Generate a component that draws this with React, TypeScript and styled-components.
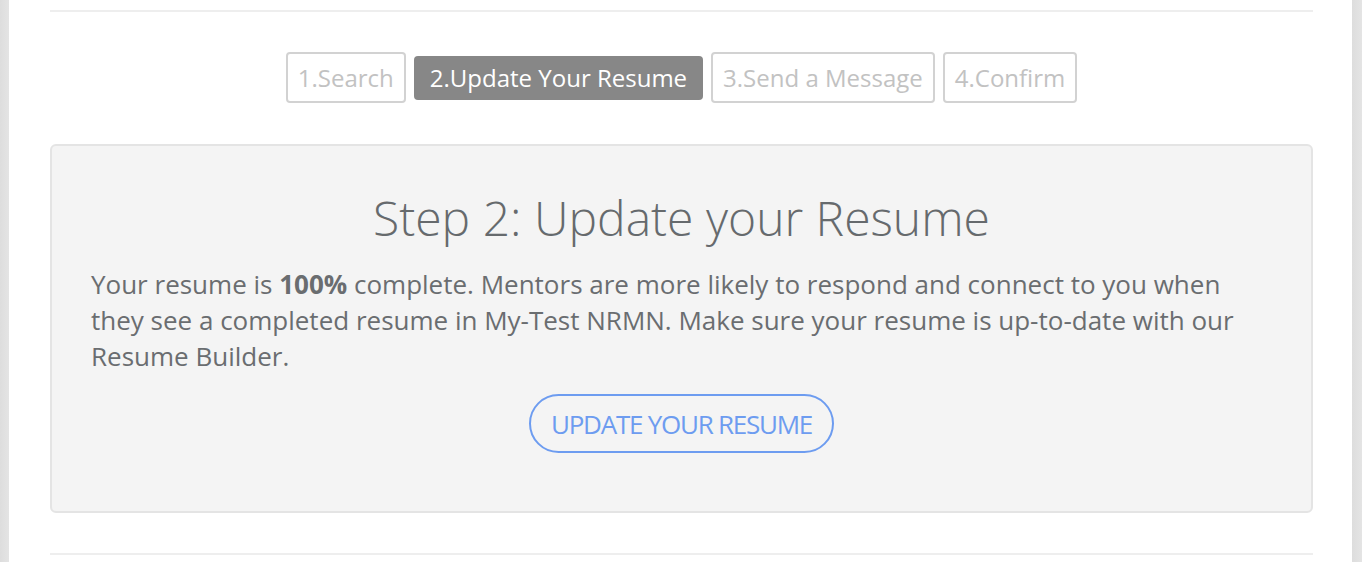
import React from "react";
import styled, { createGlobalStyle } from "styled-components";

const Global = createGlobalStyle`
  html, body { margin: 0; padding: 0; background: #ffffff; }
  body { font-family: "Open Sans", "Noto Sans", sans-serif; }
`;

const Page = styled.div`
  display: flex;
  min-height: 562px;
  background: #ffffff;
`;

const SideBar = styled.div<{ $w: number }>`
  width: ${(p) => p.$w}px;
  flex: 0 0 auto;
  background: linear-gradient(to right, #dddddd, #e4e4e4);
`;

const Main = styled.main`
  flex: 1;
  padding: 10px 39px 0 41px;
  display: flex;
  flex-direction: column;
`;

const Rule = styled.hr`
  margin: 0;
  border: none;
  border-top: 2px solid #eeeeee;
`;

const Steps = styled.nav`
  display: flex;
  justify-content: center;
  align-items: center;
  gap: 8px;
  margin: 40px 0 41px;
  height: 51px;
`;

const StepTab = styled.span<{ $active?: boolean }>`
  display: inline-flex;
  align-items: center;
  box-sizing: border-box;
  height: ${(p) => (p.$active ? 44 : 51)}px;
  padding: 0 ${(p) => (p.$active ? 16 : 10)}px;
  font-size: 24px;
  color: ${(p) => (p.$active ? "#ffffff" : "#c2c2c2")};
  background: ${(p) => (p.$active ? "#878787" : "#ffffff")};
  border: ${(p) => (p.$active ? "none" : "2px solid #d2d2d2")};
  border-radius: 4px;
  white-space: nowrap;
`;

const Panel = styled.section`
  box-sizing: border-box;
  height: 369px;
  background: #f4f4f4;
  border: 2px solid #e4e4e4;
  border-radius: 6px;
  padding: 44px 39px 0;
  display: flex;
  flex-direction: column;
  align-items: stretch;
  margin-bottom: 40px;
`;

const Heading = styled.h2`
  margin: 0 0 20px;
  text-align: center;
  font-weight: 300;
  font-size: 48px;
  line-height: 56px;
  color: #666a6d;
`;

const Body = styled.p`
  margin: 0 0 20px;
  font-size: 26px;
  line-height: 36px;
  color: #6a6d70;
  strong { font-weight: 700; }
`;

const Actions = styled.div`
  display: flex;
  justify-content: center;
`;

const PillButton = styled.button`
  box-sizing: border-box;
  height: 59px;
  padding: 0 20px;
  border: 2px solid #6d9cf0;
  border-radius: 30px;
  background: transparent;
  color: #6d9cf0;
  font-family: "Open Sans", "Noto Sans", sans-serif;
  font-size: 26px;
  letter-spacing: -1.25px;
  cursor: pointer;
`;

export default function App() {
  return (
    <>
      <Global />
      <Page>
        <SideBar $w={9} />
        <Main>
          <Rule />
          <Steps>
            <StepTab>1.Search</StepTab>
            <StepTab $active>2.Update Your Resume</StepTab>
            <StepTab>3.Send a Message</StepTab>
            <StepTab>4.Confirm</StepTab>
          </Steps>
          <Panel>
            <Heading>Step 2: Update your Resume</Heading>
            <Body>
              Your resume is <strong>100%</strong> complete. Mentors are more likely to
              respond and connect to you when they see a completed resume in My-Test
              NRMN. Make sure your resume is up-to-date with our Resume Builder.
            </Body>
            <Actions>
              <PillButton>UPDATE YOUR RESUME</PillButton>
            </Actions>
          </Panel>
          <Rule />
        </Main>
        <SideBar $w={10} />
      </Page>
    </>
  );
}
